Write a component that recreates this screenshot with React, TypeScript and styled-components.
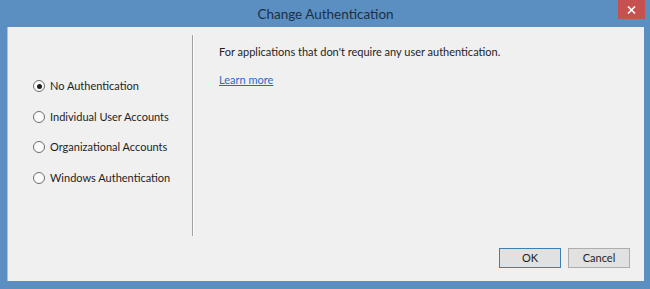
import React from "react";
import styled, { createGlobalStyle } from "styled-components";

const Global = createGlobalStyle`
  html, body { margin: 0; padding: 0; }
  body { font-family: Lato, "Noto Sans", sans-serif; }
`;

const Window = styled.div`
  width: 650px;
  height: 289px;
  box-sizing: border-box;
  background: #5b8fc1;
  display: flex;
  flex-direction: column;
  padding: 0 6px 8px 7px;
`;

const TitleBar = styled.div`
  height: 27px;
  display: flex;
  align-items: flex-start;
  position: relative;
`;

const Title = styled.div`
  flex: 1;
  text-align: center;
  font-size: 13.5px;
  line-height: 28px;
  color: #1c2f45;
`;

const CloseButton = styled.div`
  position: absolute;
  right: -1px;
  top: 0;
  width: 27px;
  height: 19px;
  background: #c75050;
  display: flex;
  align-items: center;
  justify-content: center;
`;

const Client = styled.div`
  flex: 1;
  background: #f0f0f0;
  border-left: 1px solid #aac2dc;
  display: flex;
  flex-direction: column;
`;

const Main = styled.div`
  flex: 1;
  display: flex;
`;

const LeftPanel = styled.div`
  width: 184px;
  padding: 53px 0 0 25px;
  box-sizing: border-box;
  display: flex;
  flex-direction: column;
  gap: 18.6px;
`;

const RadioRow = styled.label`
  display: flex;
  align-items: center;
  gap: 5px;
  font-size: 11px;
  line-height: 12px;
  color: #1e1e1e;
`;

const RadioCircle = styled.span<{ $checked?: boolean }>`
  width: 10px;
  height: 10px;
  border-radius: 50%;
  border: 1px solid #6d6d6d;
  background: #fbfbfb;
  display: flex;
  align-items: center;
  justify-content: center;
  &::after {
    content: "";
    width: 5px;
    height: 5px;
    border-radius: 50%;
    background: ${(p) => (p.$checked ? "#1f1f1f" : "transparent")};
  }
`;

const Divider = styled.div`
  width: 1px;
  margin: 8px 0 12px;
  background: #a0a0a0;
  border-right: 1px solid #ffffff;
`;

const RightPanel = styled.div`
  flex: 1;
  padding: 17px 0 0 25px;
  font-size: 11px;
  color: #1e1e1e;
  display: flex;
  flex-direction: column;
  gap: 12px;
  line-height: 16px;
`;

const Link = styled.a`
  color: #1c6fc6;
  text-decoration: underline;
  cursor: pointer;
`;

const Footer = styled.div`
  display: flex;
  justify-content: flex-end;
  gap: 7px;
  padding: 0 14px 13px 0;
`;

const Button = styled.button<{ $default?: boolean }>`
  width: 62px;
  height: 20px;
  box-sizing: border-box;
  font-family: Lato, "Noto Sans", sans-serif;
  font-size: 11px;
  color: #1e1e1e;
  background: #e1e1e1;
  border: 1px solid ${(p) => (p.$default ? "#3c7fb1" : "#adadad")};
  padding: 0;
  line-height: 18px;
`;

export default function App() {
  const options = [
    "No Authentication",
    "Individual User Accounts",
    "Organizational Accounts",
    "Windows Authentication",
  ];
  return (
    <>
      <Global />
      <Window>
        <TitleBar>
          <Title>Change Authentication</Title>
          <CloseButton>
            <svg width="9" height="8" viewBox="0 0 9 8">
              <path d="M1 0.5 L8 7.5 M8 0.5 L1 7.5" stroke="#fff" strokeWidth="1.6" />
            </svg>
          </CloseButton>
        </TitleBar>
        <Client>
          <Main>
            <LeftPanel>
              {options.map((o, i) => (
                <RadioRow key={o}>
                  <RadioCircle $checked={i === 0} />
                  {o}
                </RadioRow>
              ))}
            </LeftPanel>
            <Divider />
            <RightPanel>
              <div>For applications that don't require any user authentication.</div>
              <div>
                <Link>Learn more</Link>
              </div>
            </RightPanel>
          </Main>
          <Footer>
            <Button $default>OK</Button>
            <Button>Cancel</Button>
          </Footer>
        </Client>
      </Window>
    </>
  );
}
